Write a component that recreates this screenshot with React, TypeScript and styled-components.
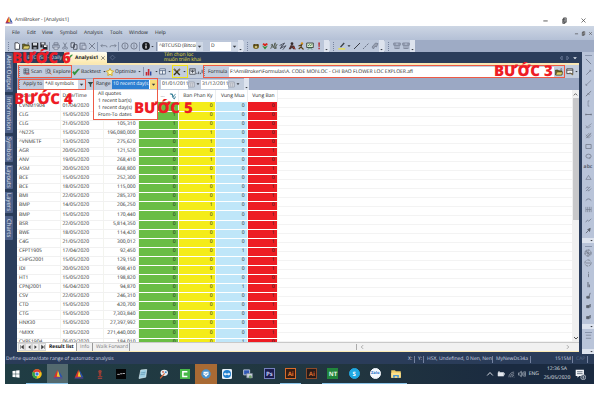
import React from "react";
import styled, { createGlobalStyle, css } from "styled-components";

const Global = createGlobalStyle`
  * { box-sizing: border-box; }
  body { margin: 0; background: #fff; text-rendering: geometricPrecision; }
  body, button, input, select { font-family: "Open Sans", "Noto Sans", sans-serif; font-size: 5px; line-height: 8px; color: #1c1e24; text-rendering: geometricPrecision; }
  button, input, select { border: 0; padding: 0; margin: 0; background: none; appearance: none; border-radius: 0; }
  svg { display: block; flex: none; }
`;

/* ---------- icons ---------- */
const K = "#3a3d45";
const G = "#6f7789";
const art: Record<string, React.ReactNode> = {
  file: <path d="M2 .8h3l1.5 1.5v5H2z" fill="#fff" stroke={K} strokeWidth=".9" />,
  open: <><path d="M.5 7V2h2.5l.8.8H7V7z" fill="#6b6426" stroke="#3b3a1c" strokeWidth=".6" /><path d="M.7 7 2 4h5.8L6.6 7z" fill="#e0cf6a" stroke="#3b3a1c" strokeWidth=".5" /><path d="M5 1.2h2l-.6-.8" stroke={K} strokeWidth=".5" fill="none" /></>,
  save: <><path d="M.7.7h6.6v6.6H.7z" fill="#24262b" /><path d="M2 .9h4v2.6H2z" fill="#d7dbe2" /><path d="M2.4 5h3.2v2.2H2.4z" fill="#8a909c" /></>,
  saveAll: <><path d="M.3.3h5.2v5.2H.3z" fill="#24262b" /><path d="M1.4.5h3v2h-3z" fill="#d7dbe2" /><path d="M2.7 2.9h5v5h-5z" fill="#24262b" stroke="#c8d0df" strokeWidth=".4" /><path d="M4 3.3h2.6V5H4z" fill="#fff" /></>,
  print: <><path d="M2 .8h4v2H2zM.8 3h6.4v3H.8z" fill="none" stroke={G} strokeWidth=".8" /><path d="M2 5h4v2.4H2z" fill="#cdd4e0" stroke={G} strokeWidth=".6" /></>,
  cut: <><path d="M2.4.6 5 5.2M5.6.6 3 5.2" stroke={G} strokeWidth=".8" /><circle cx="2.5" cy="6.2" r="1" fill="none" stroke={G} strokeWidth=".7" /><circle cx="5.5" cy="6.2" r="1" fill="none" stroke={G} strokeWidth=".7" /></>,
  copy: <path d="M1 .8h3.5v4.5H1zM3.5 2.7H7v4.6H3.5z" fill="#cfd6e4" stroke="#3c4250" strokeWidth=".8" />,
  paste: <><path d="M1 1.2h5v6H1z" fill="none" stroke={G} strokeWidth=".9" /><path d="M3 3.2h4v4H3z" fill="#c5cddd" stroke={G} strokeWidth=".7" /></>,
  x: <path d="m1 1 6 6M7 1 1 7" stroke={G} strokeWidth=".9" />,
  undo: <path d="M2.4 2.2.9 3.7l1.5 1.5M1 3.7h4.6q1.4 0 1.4 1.6" fill="none" stroke={G} strokeWidth=".8" />,
  redo: <path d="M5.6 2.2l1.5 1.5-1.5 1.5M7 3.7H2.4Q1 3.7 1 5.3" fill="none" stroke={G} strokeWidth=".8" />,
  nav: <><circle cx="4" cy="4" r="3.1" fill="none" stroke={G} strokeWidth=".9" /><path d="M4 2.3v3.4" stroke={G} strokeWidth=".8" /></>,
  info: <><circle cx="4" cy="4" r="3.9" fill="#17191d" /><path d="M4 3.5v2.9M4 1.5v1.2" stroke="#fff" strokeWidth="1.2" /></>,
  gear: <><ellipse cx="4" cy="4.5" rx="3" ry="2.4" fill="#776722" /><circle cx="2.4" cy="3" r="1.1" fill="#4c3d1c" /><circle cx="5.6" cy="3" r="1.1" fill="#4c3d1c" /><circle cx="4" cy="5" r="1" fill="#e6d9a0" /></>,
  heart: <><path d="M4 4.5 1.5 2.6 2.5 1 4 2 5.6.9 7 2.3z" fill="#d8261d" /><path d="M1 3.4 4 7.6 7 3.4 4 5z" fill="#2f8c35" /></>,
  pulse: <path d="m.7 6.8 1.7-4 .8 3 2-5-.5 6L7.2 2M.8 3l2-.7m2.4 4.3 1.8-.9" fill="none" stroke="#454c3d" strokeWidth=".8" />,
  pulse2: <path d="m.6 3.5 5-2.5-3.6 5 5-2.3-3.2 4M1.2 7l2-4" fill="none" stroke="#4a4e5b" strokeWidth=".9" />,
  person: <><circle cx="4" cy="1.7" r="1.4" fill="#342a2a" /><path d="M.6 7.3 2.8 3l3.5.8 1.2 3.5H5.2L4 5.7 2.8 7.3z" fill="#4e3230" /><path d="m5 5 2.4 2" stroke="#b43328" /></>,
  runner: <><circle cx="5" cy="1.5" r="1.2" fill="#d8941c" /><path d="M1.5 4 4.7 2.7 4 5l2.5 2.5M4 5 1.7 7" fill="none" stroke="#594115" strokeWidth="1.1" /></>,
  board: <><path d="M.7 1h6.6v4.5H.7z" fill="#dce9cf" stroke="#38443c" strokeWidth=".9" /><path d="M2 7.5 4 5.4 6 7.5M2 4l1.4-1.3 1.3 1L6 2.2" fill="none" stroke="#32763e" strokeWidth=".8" /></>,
  alert: <path d="M3.3.6h1.6L4.6 5h-1zM3.4 5.8h1.4v1.5H3.4z" fill="#b6242b" />,
  pen: <><path d="M2 4.7 5.7.6l1 1L3 5.4z" fill="#3a3f46" /><path d="M.4 6.3h6.8v1.2H.4z" fill="#f3e433" /></>,
  line: <path d="M1 7 7 1" stroke={K} strokeWidth="1" />,
  dotline: <path d="M1 7 7 1" stroke={G} strokeWidth="1" strokeDasharray="2 .7" />,
  hand: <path d="M1 5 4.5 1l2.5.6L5.4 5 4 4.2 2.4 7z" fill="#9aa2b2" stroke={G} strokeWidth=".7" />,
  grid: <path d="M.7 1h6.6v2.2H.7zM4 3v3.5M1.5 6.5h5M2 1v5m4-5v5" fill="none" stroke={G} strokeWidth=".7" />,
  scan: <><path d="M1 1h5.5v5.7H1zM1 3h5.5M1 5h5.5M3 1v5.5" fill="none" stroke="#424a5a" strokeWidth=".7" /><path d="M3.5 6.8h4" stroke="#d33" /></>,
  explore: <><path d="M.8 1.2h5v5h-5z" fill="none" stroke="#6f7686" strokeWidth=".7" strokeDasharray="1 .5" /><circle cx="4" cy="3.6" r="1.7" fill="none" stroke="#383c44" strokeWidth=".7" /><path d="m5.3 5 2 2.3" stroke="#c4552d" strokeWidth="1" /></>,
  check: <path d="m.5 4.2 2 3L7.6.9 5.7 1.2 2.6 4.6 1.8 3.2z" fill="#2f9c38" stroke="#1a6b25" strokeWidth=".3" />,
  star: <path d="m4 .4 1.1 2.3 2.5.4-1.8 1.8.4 2.6L4 6.3 1.8 7.5l.4-2.6L.4 3.1l2.5-.4z" fill="#fff8b0" stroke="#d3a415" strokeWidth=".9" />,
  bars: <><path d="M.7 4h1.6v3.4H.7zM2.8 1h1.6v6.4H2.8z" fill="#c52731" /><path d="M5 3.5h1.4v3.9H5z" fill="#2c4aa2" /></>,
  table: <path d="M.7 1h6.6v6H.7zM.7 3h6.6M4 3v4" fill="#f2f4f8" stroke="#3e5271" strokeWidth=".8" />,
  tools: <><path d="m1 1 5.8 6M6.8 1 1 7" stroke="#3c3718" strokeWidth="1.4" /><path d="m1 1 1.6 1.6M7 1 5.2 2.8" stroke="#88734a" strokeWidth="1.4" /></>,
  plusbox: <path d="M.8.8h6.4v6.4H.8zM4 2v4M2 4h4M1 2.4h6" fill="#e6e9ef" stroke="#373b43" strokeWidth=".8" />,
  dots: <path d="M1 7V5.5M3 7V4M5 7V5.5M7 6V2" stroke="#434955" strokeWidth="1" />,
  funnel: <path d="M.8 1h6.4L4.8 4v3.2L3.2 6V4z" fill="#314b47" />,
  cal: <><path d="M.8 1.2h6.4v5.6H.8z" fill="#f3f4f7" stroke="#808898" strokeWidth=".7" /><path d="M1 2.5h6M3 2.5v4M5 2.5v4M1 4.6h6" stroke="#808898" strokeWidth=".5" /></>,
  sort: <path d="M1 1.2h3v3h2M3.8 4.2 6 7l1.5-3M2 .8 5 3.4 7.5 1.5" fill="none" stroke="#2d7890" strokeWidth="1" />,
  editPage: <><path d="M.8.8h6v4.8h-6zM.8 2.2h6" fill="#f3f4f5" stroke="#333" strokeWidth=".8" /><path d="m3 4 3.5 3.5L7.5 6z" fill="#7a6b45" /></>,
  ami: <><path d="M3.6.4.5 7h4z" fill="#d5322b" /><path d="M4 1.2 3 6l3 .3z" fill="#efc938" /><path d="M4.3.6 7.7 6.8 5.5 6z" fill="#2850ae" /><path d="m.3 7.5 1-1h5.3l1 1z" fill="#5a45a0" /></>,
  windows: <path d="m.5 1.1 3.1-.4v3.1H.5zm3.6-.5L7.5.2v3.6H4.1zM.5 4.2h3.1v3.1L.5 6.9zm3.6 0h3.4v3.6l-3.4-.5z" fill="#fff" />,
  chrome: <><circle cx="4" cy="4" r="3.8" fill="#f3c318" /><path d="M4 4 .7 2.1A3.8 3.8 0 0 1 7.3 2.1z" fill="#df3f30" /><path d="M4 4 .7 2.1A3.8 3.8 0 0 0 3.8 7.8z" fill="#34a34c" /><circle cx="4" cy="4" r="1.8" fill="#fff" /><circle cx="4" cy="4" r="1.35" fill="#3b78d5" /></>,
  figure: <><circle cx="4" cy="2" r="1.3" fill="#a8463c" /><path d="M2.8 1.2 4 2.4 5.3 1.2M2.8 3h2.4l-.5 2.5h1.2v.9H2.2v-.9h1.2z" fill="#8f3a33" /><path d="M2.3 7.4h3.4" stroke="#bd4840" strokeWidth=".8" /></>,
  black: <><path d="M0 0h8v8H0z" fill="#050506" /><path d="M1 4.3h2m.3-.5H5m.3-.2h1.8" stroke="#c9ccd0" strokeWidth=".7" /></>,
  notebook: <><path d="M2.2.8 7 .3 6.2 6.5.8 7.6z" fill="#9fcfe2" stroke="#e0f0f5" strokeWidth=".5" /><path d="M2 3.2 6 2.6M1.8 4.6l4-.6" stroke="#578fab" strokeWidth=".5" /></>,
  paint: <><ellipse cx="4.2" cy="3" rx="3" ry="2.5" fill="#e9f0f4" /><circle cx="5.4" cy="2.5" r=".8" fill="#4288c7" /><circle cx="3.2" cy="2.3" r=".7" fill="#d05538" /><path d="m1 7.5 3.5-4" stroke="#d8673b" strokeWidth="1" /></>,
  camtasia: <><path d="M0 0h8v8H0z" fill="#49b849" /><path d="M5.9 2.2H2.3v3.7h3.6" fill="none" stroke="#fff" strokeWidth="1.2" /></>,
  shield: <><circle cx="4" cy="4" r="3.8" fill="#4993cf" /><path d="M2 2.2h4v2L4 6.4 2 4.2z" fill="#fff" /><path d="m3 3.5 1 1 1.2-1.5" fill="none" stroke="#3779b7" strokeWidth=".6" /></>,
  team: <><rect width="8" height="8" rx="1" fill="#e9f2f9" /><circle cx="4" cy="4" r="3.2" fill="#2181d0" /><path d="m1.3 4 1.5-1.3v.8h2.4v-.8L6.7 4 5.2 5.3v-.8H2.8v.8z" fill="#fff" /></>,
  remote: <><path d="M.5.7h4.8v4H.5z" fill="#3158b6" stroke="#c2cbdb" strokeWidth=".7" /><path d="M3 3.6h4.5v3.5H3z" fill="#ccd3dd" stroke="#7c8798" strokeWidth=".5" /><circle cx="5.8" cy="6.2" r="1.2" fill="#72a36c" /></>,
  folder: <><path d="M.2 1h3l.6.8h4V7H.2z" fill="#f3cf68" /><path d="M.2 3h7.6v4H.2z" fill="#fbe18d" /><path d="M1.7 4.8h4.6V7H5V5.8H3V7H1.7z" fill="#4b97d1" /></>,
  up: <path d="m1.2 5.5 2.8-3 2.8 3" fill="none" stroke="#e4e8ee" strokeWidth=".9" />,
  battery: <><path d="M1 2.5h5.7v3.6H1zM7 3.5h.7V5" fill="#e4e8ee" stroke="#e4e8ee" strokeWidth=".5" /><path d="M2 1v3" stroke="#e4e8ee" strokeWidth=".9" /></>,
  wifi: <path d="M1 7.2a6 6 0 0 1 6-6M2.8 7.2A4.2 4.2 0 0 1 7 3M4.6 7.2A2.4 2.4 0 0 1 7 4.8M6.5 7h.8" fill="none" stroke="#aeb5c1" strokeWidth=".7" />,
  sound: <><path d="M.3 3h1.2L3.3 1.3v5.4L1.5 5H.3z" fill="none" stroke="#d4dae3" strokeWidth=".6" /><path d="M4.4 2.5q1 1.5 0 3M5.6 1.7q1.5 2.3 0 4.6M6.8 1q2 3 0 6" fill="none" stroke="#d4dae3" strokeWidth=".6" /></>,
  note: <><path d="M.5.6h6v4.5H3L1.8 6.4V5.1H.5z" fill="#f5f7fa" /><path d="M1.5 2h4M1.5 3.4h4" stroke="#24344b" strokeWidth=".5" /><circle cx="6" cy="6" r="1.8" fill="#38475d" stroke="#cfd5de" strokeWidth=".5" /><path d="M6 5v2" stroke="#fff" strokeWidth=".5" /></>,
  down: <path d="M2 3h4L4 5.3z" fill="#32363e" />,
  tinyDown: <path d="M1.5 3h5L4 5.8z" fill="#e6ebf3" />,
  navL: <path d="M5.5 1.5 3 4l2.5 2.5z" fill="none" stroke="#8696b3" strokeWidth=".8" />,
  navR: <path d="M2.5 1.5 5 4 2.5 6.5z" fill="none" stroke="#8696b3" strokeWidth=".8" />,
  diamond: <path d="M4 1.3 6.7 4 4 6.7 1.3 4z" fill="none" stroke="#6c7b99" strokeWidth=".7" />,
  chevUp: <path d="m2 5 2-2 2 2" fill="none" stroke="#555" strokeWidth="1" />,
  chevDown: <path d="m2 3 2 2 2-2" fill="none" stroke="#555" strokeWidth="1" />,
  chevL: <path d="M5.5 1.5 3 4l2.5 2.5" fill="none" stroke="#888" strokeWidth=".9" />,
  chevR: <path d="M2.5 1.5 5 4 2.5 6.5" fill="none" stroke="#888" strokeWidth=".9" />,
  first: <path d="M2 1.5v5M6 1.5 3 4l3 2.5z" fill="#333" stroke="#333" strokeWidth=".6" />,
  prev: <path d="M6 1.5 3 4l3 2.5z" fill="#333" />,
  next: <path d="m2 1.5 3 2.5-3 2.5z" fill="#333" />,
  last: <path d="m2 1.5 3 2.5-3 2.5zM6 1.5v5" fill="#333" stroke="#333" strokeWidth=".6" />,
  dl1: <path d="m1 1 6 6" stroke={G} strokeWidth="1" />,
  dl2: <path d="M1.5 6.5 6 2m-1-.5h1.5V3" stroke={G} strokeWidth=".9" fill="none" />,
  dl3: <path d="M1.2 7 7 1.5M1 5.5v1.7h1.5" stroke={G} strokeWidth=".7" fill="none" />,
  dl4: <path d="M1 7 7 1.3M3 3.5l2 2" stroke="#656c7b" strokeWidth=".9" fill="none" />,
  dl5: <path d="M5 1H3.5v6H5" stroke={G} strokeWidth=".7" fill="none" />,
  dl6: <path d="M.5 4h7M1 3v2m6-2v2" stroke="#656c7b" strokeWidth=".9" fill="none" />,
  dl7: <path d="m.7 6.8 3-2 3.8-3M1 4l2 3 3.5-2" stroke={G} strokeWidth=".6" fill="none" />,
  dl8: <path d="m1 5 4-4m-3 6 5-5M1 7l6-6m-3 6 3-3M1 3l3 4" stroke="#737a89" strokeWidth=".7" />,
  rect: <path d="M1 1.7h6v4.6H1z" fill="none" stroke="#6c7382" strokeWidth=".8" />,
  ell: <><ellipse cx="4" cy="3.6" rx="3" ry="2.3" fill="none" stroke="#6c7382" strokeWidth=".8" /><path d="M5.5 5v2" stroke="#6c7382" strokeWidth=".6" /></>,
  tri: <path d="m4 1.6 3 4.6H1z" fill="none" stroke={G} strokeWidth=".7" />,
  wave: <path d="m1 4 2-2 1 2 2-2M1 7l2-2 1 2 3-3" fill="none" stroke={G} strokeWidth=".8" />,
  arc: <path d="M.8 5.3q3.2-4 6.4 0" fill="none" stroke={G} strokeWidth=".9" />,
  fib: <path d="M1 1v6m2-6v6m2-6v6m2-6v6M1 4h6" stroke={G} strokeWidth=".7" />,
  zig: <path d="m.8 6 2-2.5 1.5 1.3L7.2 2" fill="none" stroke={G} strokeWidth=".8" />,
  arrow: <path d="m1 7 2.5-2.5M3 3l3-1.5L5.3 5z" fill="#59606d" stroke="#59606d" strokeWidth=".9" />,
  globe: <><circle cx="4" cy="4" r="3.2" fill="none" stroke="#6d7482" strokeWidth=".8" strokeDasharray="3 .6" /><path d="M1 4h6M4 1v6M2 2l4 4" stroke="#6d7482" strokeWidth=".7" /></>,
  ring: <><circle cx="4" cy="4" r="3.1" fill="none" stroke="#7b8290" strokeWidth=".9" strokeDasharray="3.5 1" /><path d="M2 4h4" stroke="#7b8290" strokeWidth=".8" /></>,
  t1: <path d="M4 1v1m0 1v4" stroke="#697080" strokeWidth=".9" />,
  t2: <path d="M3.4 1v6M5 4v3" stroke="#697080" strokeWidth="1.2" />,
  t3: <path d="M2 5h3v2H2zM4.6 5l1.4-4" fill="#59606d" stroke="#59606d" strokeWidth=".9" />,
  t4: <path d="M1.8 4h3v2.5h-3zM5 4l1-1.5V6" fill="#59606d" stroke="#59606d" strokeWidth=".8" />,
  bar2: <path d="M1 2.5h6M1 6h6" stroke="#818a9c" strokeWidth="1" />,
  min: <path d="M1.5 4.5h5" stroke="#333" strokeWidth=".9" />,
  restore: <path d="M3 1h3v5H3zM2 2.3h2.5v5H2z" fill="#c9cbd0" stroke="#333" strokeWidth=".8" />,
  close: <path d="m1.7 1.7 4.6 4.6M6.3 1.7 1.7 6.3" stroke="#444" strokeWidth=".8" />,
};
const Svg = styled.svg<{ $s: number }>`width: ${p => p.$s}px; height: ${p => p.$s}px;`;
const Icon = ({ n, s = 8 }: { n: string; s?: number }) => <Svg $s={s} viewBox="0 0 8 8" aria-hidden>{art[n]}</Svg>;

/* ---------- frame ---------- */
const Screen = styled.main`position: relative; padding: 14px 6px 0 5px; white-space: nowrap; overflow: hidden;`;
const TitleBar = styled.header`display: flex; align-items: center; height: 12px; gap: 2px; background: #fff;`;
const Fill = styled.div`flex: 1;`;
const WinButtons = styled.div`display: flex; gap: 11px; padding-right: 7px;`;
const IconButton = styled.button<{ $w?: number }>`
  display: flex; align-items: center; justify-content: center; flex: none; width: ${p => p.$w ?? 10}px; height: 10px;
`;
const MenuBar = styled.nav`
  display: flex; align-items: center; height: 14px; padding-left: 7px; background: linear-gradient(#cdd6e4, #b4c0d6);
`;
const MenuItem = styled.button<{ $w: number }>`width: ${p => p.$w}px; text-align: left;`;
const Grip = styled.i`flex: none; width: 1px; height: 9px; margin-right: 3px; border-left: 1px dotted #7885a0;`;
const ToolBar = styled.div`display: flex; align-items: center; height: 12px; background: #9eabc5;`;
const ToolGroup = styled.div<{ $w: number }>`
  display: flex; align-items: center; flex: none; width: ${p => p.$w}px; height: 12px; padding-left: 3px; background: #bcc7da; border-radius: 0 2px 2px 0; border-right: 1px solid #d4dce8;
`;
const Rule = styled.i`flex: none; width: 1px; height: 9px; margin: 0 1px; background: #8996af;`;
const More = styled.button`
  flex: none; width: 5px; height: 12px; margin-left: auto; display: flex; align-items: flex-end; background: #dde3ee;
`;
const Field = styled.select<{ $w: number; $mark?: boolean }>`
  flex: none; width: ${p => p.$w}px; height: 9px; padding: 0 7px 0 1px; background: ${p => p.$mark ? "linear-gradient(90deg, #2c7fd2 37px, #fff 37px)" : "#fff"};
  color: ${p => p.$mark ? "#fff" : "#1c1e24"}; text-overflow: clip; overflow: hidden; line-height: 9px;
`;
const FieldBox = styled.span`position: relative; display: flex; flex: none;`;
const FieldArrow = styled.span<{ $hot?: boolean }>`
  position: absolute; right: 0; top: 0; display: flex; align-items: center; width: 7px; height: 9px; pointer-events: none;
  background: ${p => p.$hot ? "#f8dc78" : "#cfd8e6"};
`;
const Select = ({ label, value, w, mark }: { label: string; value: string; w: number; mark?: boolean }) => (
  <FieldBox><Field aria-label={label} $w={w} $mark={mark}><option>{value}</option></Field><FieldArrow $hot={mark}><Icon n="down" s={7} /></FieldArrow></FieldBox>
);

/* ---------- work area ---------- */
const Work = styled.div`display: flex; background: #2b3d5b; height: 302px;`;
const SideTabs = styled.aside`display: flex; flex-direction: column; gap: 3px; width: 12px; padding-top: 1px;`;
const SideTab = styled.button<{ $h: number }>`
  width: 8px; height: ${p => p.$h}px; writing-mode: vertical-rl; background: #50628a; color: #e0e6f0; font-size: 6px; line-height: 8px; border-radius: 0 1px 1px 0;
`;
const Center = styled.section`flex: 1; min-width: 0; display: flex; flex-direction: column; padding-bottom: 2px;`;
const DocTabs = styled.div`display: flex; align-items: center; gap: 2px; height: 11px; flex: none; color: #dfe5ef;`;
const DocTab = styled.button<{ $active?: boolean; $w: number }>`
  display: flex; align-items: center; gap: 2px; width: ${p => p.$w}px; height: 11px; padding-left: 2px; color: #dfe5ef; justify-content: flex-end;
  ${p => p.$active && css`background: linear-gradient(#fffdf2, #fde9ae); color: #222; font-weight: 700; justify-content: flex-start; border-radius: 1px 1px 0 0;`}
`;
const Hint = styled.p`margin: 0 0 0 46px; color: #eee03c; line-height: 5px;`;
const DocNav = styled.div`display: flex; margin-left: auto; padding-right: 1px; gap: 1px;`;
const Bar = styled.div<{ $h: number; $top?: boolean }>`
  display: flex; flex: none; align-items: center; height: ${p => p.$h}px; padding-left: 1px; background: ${p => p.$top ? "#c3cddd" : "#9ba8c4"};
  ${p => p.$top && css`border-top: 2px solid #f9e8b5;`}
`;
const Framed = styled.div<{ $c?: string; $grow?: boolean }>`
  display: flex; align-items: center; height: 13px; padding: 0 1px; outline: 1px solid ${p => p.$c ?? "#ee5a45"}; outline-offset: -1px; flex: ${p => p.$grow ? 1 : "none"};
`;
const ToolButton = styled.button<{ $w: number }>`display: flex; align-items: center; gap: 1px; width: ${p => p.$w}px; height: 10px; flex: none;`;
const FormulaLabel = styled.label`width: 21px; flex: none;`;
const FormulaInput = styled.input`flex: 1; min-width: 0; height: 10px; padding-left: 1px; background: #fff;`;
const FilterGroup = styled.div<{ $w: number }>`
  position: relative; flex: none; display: flex; align-items: center; width: ${p => p.$w}px; height: 11px; padding-left: 3px; background: #c3cddd;
`;
const ApplyGroup = styled(FilterGroup)`outline: 1px solid #ee5a45; outline-offset: -1px; padding-left: 1px;`;
const Label = styled.span<{ $w: number }>`width: ${p => p.$w}px; flex: none;`;
const DateInput = styled.input`width: 27px; height: 9px; background: #fff; padding-left: 1px; flex: none;`;
const Menu = styled.ul`
  position: absolute; z-index: 2; left: 0; top: -1px; width: 65px; height: 42px; margin: 0; padding: 12px 0 0 4px; list-style: none;
  border: 1px solid #ee5a45; background: linear-gradient(transparent 11px, #fff 11px); line-height: 7px; pointer-events: none;
`;
const SheetWrap = styled.div`display: flex; flex: 1; min-height: 0; background: #fff;`;
const Sheet = styled.div`
  flex: 1; overflow: hidden; background: repeating-linear-gradient(#fff 0 8px, #f3f3f3 8px 9px);
`;
const Table = styled.table`border-collapse: collapse; table-layout: fixed; width: 260px; line-height: 7px; background: #fff;`;
const Th = styled.th<{ $left?: boolean; $w: number }>`
  width: ${p => p.$w}px; height: 12px; padding: 0 2px; text-align: ${p => p.$left ? "left" : "right"}; font-weight: 400; border-right: 1px solid #eceef0;
`;
const HeaderRow = styled.tr`background: #fff;`;
const HeadFlex = styled.span`display: flex; justify-content: flex-end; align-items: center; gap: 4px;`;
const Row = styled.tr`height: 9px; &:nth-child(13n) { height: 10px; }`;
const Td = styled.td<{ $bg?: string; $left?: boolean }>`
  padding: 0 2px; overflow: hidden; text-align: ${p => p.$left ? "left" : "right"}; background: ${p => p.$bg ?? "#fff"};
  border-right: 1px solid #f3f4ee; border-bottom: 1px solid ${p => p.$bg ? "rgba(255,255,255,.6)" : "#f1f1f1"}; background-clip: padding-box;
`;
const VScroll = styled.div`width: 7px; flex: none; display: flex; flex-direction: column; align-items: center; background: #f0f0f0; padding-top: 1px;`;
const Thumb = styled.i`width: 6px; height: 122px; background: #c8c8ca;`;
const SheetTabs = styled.div`
  display: flex; flex: none; align-items: center; height: 10px; background: #f1f1f1; border-top: 1px solid #c9c9c9; border-bottom: 1px solid #fbe9b4; padding-left: 1px;
`;
const PageButton = styled.button`width: 7px; height: 8px; border: 1px solid #d5d5d5; display: flex; justify-content: center; align-items: center; flex: none;`;
const SheetTab = styled.button<{ $w: number; $active?: boolean }>`
  width: ${p => p.$w}px; height: 8px; padding: 0 0 0 3px; text-align: left; border-right: 1px solid #999; flex: none;
  color: ${p => p.$active ? "#111" : "#777"}; background: ${p => p.$active ? "#fff" : "none"}; font-weight: ${p => p.$active ? 700 : 400};
`;
const HScroll = styled.div`display: flex; flex: 1; justify-content: space-between; align-items: center; margin-left: 226px; padding: 0 8px 0 2px; border-left: 1px solid #aaa;`;
const Draw = styled.aside`width: 12px; flex: none; margin-left: 3px; background: #b9c4d9; display: flex; flex-direction: column; align-items: center;`;
const DrawGroup = styled.div<{ $h: number }>`
  height: ${p => p.$h}px; width: 100%; display: flex; flex-direction: column; align-items: center; justify-content: space-between; padding-top: 3px;
`;
const DrawHandle = styled.i`width: 7px; height: 1px; background: #8995ac; flex: none;`;
const DrawMore = styled.button`height: 5px; width: 100%; display: flex; justify-content: flex-end; background: #dde3ee; margin-top: auto; flex: none;`;
const DrawButton = styled.button`display: flex; align-items: center; justify-content: center; height: 10px; width: 12px; color: #5c6371; font-weight: 700;`;

/* ---------- status and taskbar ---------- */
const Status = styled.footer`display: flex; align-items: center; height: 10px; background: #2a3c59; color: #d3dae6; padding: 0 6px 0 1px;`;
const Cell = styled.span<{ $w: number; $dim?: boolean }>`
  width: ${p => p.$w}px; flex: none; padding-left: 3px; border-right: 1px solid #7482a0; color: ${p => p.$dim ? "#5f708e" : "#d3dae6"}; line-height: 7px;
`;
const TaskBar = styled.footer`display: flex; align-items: center; height: 20px; background: linear-gradient(90deg, #203d44, #21353f 60%, #1a2a40 85%);`;
const Apps = styled.div`display: grid; grid-template-columns: repeat(19, 1fr); flex: none; width: 402px;`;
const TaskButton = styled.button<{ $bg?: string; $run?: boolean }>`
  display: flex; align-items: center; justify-content: center; height: 20px; background: ${p => p.$bg ?? "none"};
  border-bottom: 1px solid ${p => p.$run ? "#8cc5ea" : "transparent"};
`;
const Tile = styled.span<{ $bg: string; $fg: string; $bd: string; $round?: boolean; $small?: boolean }>`
  width: 11px; height: 11px; display: flex; align-items: center; justify-content: center; font-weight: 700; font-size: ${p => p.$small ? 4 : 6}px; line-height: 8px;
  background: ${p => p.$bg}; color: ${p => p.$fg}; border: 1px solid ${p => p.$bd}; border-radius: ${p => p.$round ? "6px" : 0};
`;
const Tray = styled.div`display: flex; align-items: center; margin-left: auto; gap: 3px; color: #e6eaf0; padding-right: 8px;`;
const Clock = styled.time`width: 30px; text-align: center; line-height: 9px; white-space: pre-line; flex: none;`;

const Step = styled.strong<{ $x: number; $y: number }>`
  position: absolute; z-index: 5; left: ${p => p.$x}px; top: ${p => p.$y}px; color: #ee1c25; font-size: 15px; line-height: 20px; font-weight: 900;
`;

const menus: [string, number][] = [["File", 15], ["Edit", 15], ["View", 18], ["Symbol", 24], ["Analysis", 26], ["Tools", 19], ["Window", 26], ["Help", 20]];
const main1 = ["file", "open", "save", "saveAll", "|", "print", "cut", "copy", "paste", "x", "|", "undo", "redo", "|", "nav", "nav", "|", "info"];
const main2 = ["gear", "heart", "pulse", "pulse2", "person", "runner", "board", "alert"];
const rows = `CVNM1904|01/04/2020|94,010|1|0|0|0
CLG|15/05/2020|101,210|1|0|0|0
CLG|21/05/2020|105,310|1|0|0|0
^N225|15/05/2020|196,080,000|0|1|0|0
^VNMETF|13/05/2020|275,620|0|1|0|0
AGR|20/05/2020|121,520|0|0|0|1
ANV|19/05/2020|268,410|0|1|0|0
ASM|20/05/2020|668,800|0|0|0|1
BCE|15/05/2020|252,300|0|1|0|0
BCE|18/05/2020|115,000|0|0|0|1
BMI|22/05/2020|285,370|0|0|0|1
BMP|14/05/2020|206,250|0|1|0|0
BMP|15/05/2020|170,440|0|0|0|1
BSR|22/05/2020|5,814,350|0|0|0|1
BWE|18/05/2020|114,420|0|0|0|1
C4G|21/05/2020|300,012|0|0|0|1
CFPT1905|17/04/2020|92,450|0|0|1|0
CHPG2001|15/05/2020|129,150|0|0|0|1
IDI|20/05/2020|998,410|0|0|0|1
HT1|15/05/2020|198,820|0|1|0|0
CPNJ2001|16/04/2020|94,870|0|0|1|0
CSV|22/05/2020|246,310|0|0|0|1
CTD|15/05/2020|420,700|0|0|0|1
CTG|15/05/2020|7,303,840|0|0|0|1
HNX30|15/05/2020|27,397,992|0|0|0|1
^MIXX|13/05/2020|271,440,000|0|0|0|1
CVRE1904|06/03/2020|184,010|0|0|1|0`.split("\n").map(r => r.split("|"));
const fills = [undefined, undefined, undefined, "#6abd45", "#f4ec19", "#bfe6f9", "#ed1c24"];
const draw1 = ["dl1", "dl2", "dl3", "dl4", "dl5", "dl6", "dl7", "dl8", "rect", "ell", "abc", "tri", "wave", "arc", "fib", "zig", "arrow"];
const draw2 = ["globe", "ring", "t1", "t2", "t3", "t4", "t4"];
const sides: [string, number][] = [["Alert Output", 39], ["Information", 38], ["Symbols", 26], ["Layouts", 24], ["Layers", 21], ["Charts", 24]];

type Task = { n?: string; t?: string; bg?: string; run?: boolean; tile?: [string, string, string, boolean?] };
const tasks: Task[] = [
  { n: "windows" }, { n: "chrome", run: true }, { n: "ami", bg: "#536a6f", run: true }, { n: "ami" }, { n: "figure" }, { n: "black" },
  { n: "notebook" }, { n: "paint" }, { n: "camtasia" }, { n: "shield", bg: "#a96a34" }, { n: "team" }, { n: "remote" },
  { t: "Ps", tile: ["#1b1c4e", "#bdc8f5", "#7480bd"] }, { t: "Ai", tile: ["#361c12", "#e8772e", "#d86c2b"], run: true },
  { t: "Ai", tile: ["#271a18", "#d66c31", "#8c4a29"] }, { t: "NT", tile: ["#21863c", "#e7f4e8", "#21863c"], run: true },
  { t: "S", tile: ["#20a8e2", "#fff", "#20a8e2", true], run: true }, { t: "Zalo", tile: ["#f4f8fd", "#216fc5", "#f4f8fd", true], run: true }, { n: "folder", run: true },
];

const Overflow = () => <More aria-label="More"><Icon n="down" s={5} /></More>;

export default function App() {
  return (
    <>
      <Global />
      <Screen>
        <TitleBar><Icon n="ami" />AmiBroker - [Analysis1]<Fill />
          <WinButtons>{["min", "restore", "close"].map(n => <IconButton key={n} $w={8} aria-label={n}><Icon n={n} s={7} /></IconButton>)}</WinButtons>
        </TitleBar>
        <MenuBar>{menus.map(([m, w]) => <MenuItem key={m} $w={w}>{m}</MenuItem>)}<Fill />
          {["min", "restore", "close"].map(n => <IconButton key={n} $w={7} aria-label={`${n} document`}><Icon n={n} s={5} /></IconButton>)}
        </MenuBar>
        <ToolBar>
          <ToolGroup $w={239}><Grip />
            {main1.map((n, i) => n === "|" ? <Rule key={i} /> : <IconButton key={i} $w={9} aria-label={n}><Icon n={n} /></IconButton>)}
            <Icon n="down" s={5} /><Rule />
            <Select label="Symbol" value="^BTCUSD (Bitcoi" w={45} /><Fill /><Select label="Interval" value="D" w={28} /><Overflow />
          </ToolGroup>
          <ToolGroup $w={86}><Grip />{main2.map(n => <IconButton key={n} $w={9} aria-label={n}><Icon n={n} /></IconButton>)}<Overflow /></ToolGroup>
          <ToolGroup $w={55}><Grip /><IconButton $w={9} aria-label="Highlight"><Icon n="pen" /></IconButton><Icon n="down" s={6} />
            {["line", "dotline", "hand"].map(n => <IconButton key={n} $w={9} aria-label={n}><Icon n={n} /></IconButton>)}<Overflow /></ToolGroup>
          <ToolGroup $w={30}><Grip /><IconButton $w={9} aria-label="Grid"><Icon n="grid" /></IconButton><IconButton $w={9} aria-label="Columns"><Icon n="grid" /></IconButton><Overflow /></ToolGroup>
        </ToolBar>
        <Work>
          <SideTabs>{sides.map(([t, h]) => <SideTab key={t} $h={h}>{t}</SideTab>)}</SideTabs>
          <Center>
            <DocTabs>
              <DocTab $w={45}>BTCUSD - Daily</DocTab>
              <DocTab $active $w={43}><Icon n="check" s={7} />Analysis1<Icon n="close" s={6} /></DocTab>
              <Icon n="diamond" s={7} />
              <Hint>Tên chọn lọc<br />muốn triển khai</Hint>
              <DocNav><Icon n="navL" s={6} /><Icon n="navR" s={6} /><Icon n="tinyDown" s={6} /></DocNav>
            </DocTabs>
            <Bar $h={15} $top>
              <Framed><Grip />
                <ToolButton $w={22}><Icon n="scan" s={7} />Scan</ToolButton>
                <ToolButton $w={26}><Icon n="explore" s={7} />Explore</ToolButton>
              </Framed>
              <ToolButton $w={34}><Icon n="check" />Backtest<Icon n="down" s={5} /></ToolButton>
              <ToolButton $w={36}><Icon n="star" />Optimize<Icon n="down" s={5} /></ToolButton><Rule />
              <ToolButton $w={14}><Icon n="bars" /><Icon n="down" s={5} /></ToolButton>
              <ToolButton $w={13}><Icon n="table" s={7} /><Icon n="down" s={5} /></ToolButton>
              <Framed $c="#f0e21d"><ToolButton $w={14}><Icon n="tools" /><Icon n="down" s={5} /></ToolButton></Framed>
              <IconButton $w={8} aria-label="Add"><Icon n="plusbox" s={7} /></IconButton>
              <IconButton $w={7} aria-label="Settings"><Icon n="dots" s={7} /></IconButton>
              <Framed $grow><Grip /><FormulaLabel htmlFor="formula">Formula</FormulaLabel>
                <FormulaInput id="formula" defaultValue={"F:\\AmiBroker\\Formulas\\A. CODE MOI\\LOC - CHI BAO FLOWER LOC EXPLOER.afl"} />
                <IconButton aria-label="Open formula"><Icon n="open" /></IconButton></Framed>
              <IconButton $w={9} aria-label="Edit formula"><Icon n="editPage" /></IconButton>
              <Icon n="down" s={5} />
            </Bar>
            <Bar $h={12}>
              <ApplyGroup $w={68}><Grip /><Label $w={21}>Apply to</Label><Select label="Apply to" value="*All symbols" w={41} /></ApplyGroup>
              <FilterGroup $w={7}><IconButton $w={3} aria-label="Filter"><Icon n="funnel" s={7} /></IconButton></FilterGroup>
              <FilterGroup $w={65}><Label $w={16}>Range</Label><Select label="Range" value="10 recent day(s)" w={45} mark />
                <Menu><li>All quotes</li><li>1 recent bar(s)</li><li>1 recent day(s)</li><li>From-To dates</li></Menu>
              </FilterGroup>
              <FilterGroup $w={91}><DateInput aria-label="From" defaultValue="01/01/2011" /><Icon n="cal" s={7} /><Icon n="down" s={6} />
                <DateInput aria-label="To" defaultValue="31/12/2011" /><Icon n="cal" s={7} /><Icon n="down" s={6} /><Overflow /></FilterGroup>
            </Bar>
            <SheetWrap>
              <Sheet>
                <Table>
                  <thead><HeaderRow>
                    <Th $w={43} $left>Ticker</Th><Th $w={43} $left>Date/Time</Th><Th $w={35}>Close</Th>
                    <Th $w={40}><HeadFlex>...<Icon n="sort" s={7} /></HeadFlex></Th><Th $w={37}>Ban Phan Ky</Th><Th $w={32}>Vung Mua</Th><Th $w={30}>Vung Ban</Th>
                  </HeaderRow></thead>
                  <tbody>{rows.map((r, i) => <Row key={i}>{r.map((c, j) => <Td key={j} $left={j < 2} $bg={fills[j]}>{c}</Td>)}</Row>)}</tbody>
                </Table>
              </Sheet>
              <VScroll><Icon n="chevUp" s={7} /><Thumb /><Fill /><Icon n="chevDown" s={8} /></VScroll>
            </SheetWrap>
            <SheetTabs>
              {["first", "prev", "next", "last"].map(n => <PageButton key={n} aria-label={`${n} sheet`}><Icon n={n} s={6} /></PageButton>)}
              <SheetTab $w={31} $active>Result list</SheetTab><SheetTab $w={16}>Info</SheetTab><SheetTab $w={37}>Walk Forward</SheetTab>
              <HScroll><Icon n="chevL" s={6} /><Icon n="chevR" s={6} /></HScroll>
            </SheetTabs>
          </Center>
          <Draw>
            <DrawGroup $h={184}><DrawHandle />{draw1.map(n => <DrawButton key={n} aria-label={n}>{n === "abc" ? n : <Icon n={n} s={7} />}</DrawButton>)}</DrawGroup>
            <DrawMore aria-label="More tools"><Icon n="down" s={5} /></DrawMore>
            <DrawGroup $h={78}><DrawHandle />{draw2.map((n, i) => <DrawButton key={i} aria-label={n}><Icon n={n} s={n === "globe" || n === "ring" ? 8 : 7} /></DrawButton>)}</DrawGroup>
            <DrawMore aria-label="More tools"><Icon n="down" s={5} /></DrawMore>
            <DrawGroup $h={18}><DrawHandle /><Icon n="bar2" s={7} /><Fill /></DrawGroup>
            <DrawMore aria-label="More tools"><Icon n="down" s={5} /></DrawMore>
          </Draw>
        </Work>
        <Status>Define quote/date range of automatic analysis<Fill />
          <Cell $w={10}>X:</Cell><Cell $w={9}>Y:</Cell><Cell $w={69}>HSX, Undefined, 0 Nen, Nen</Cell><Cell $w={38}>MyNewDs34a</Cell><Cell $w={21} /><Cell $w={21}>1515M</Cell><Cell $w={15} $dim>CAP</Cell>
        </Status>
        <TaskBar>
          <Apps>{tasks.map((t, i) => <TaskButton key={i} $bg={t.bg} $run={t.run} aria-label={t.n ?? t.t}>
            {t.n ? <Icon n={t.n} s={t.n === "windows" ? 8 : 10} /> : t.tile && <Tile $bg={t.tile[0]} $fg={t.tile[1]} $bd={t.tile[2]} $round={t.tile[3]} $small={t.t === "Zalo"}>{t.t}</Tile>}
          </TaskButton>)}</Apps>
          <Tray><Icon n="up" /><Icon n="battery" /><Icon n="wifi" s={7} /><Icon n="sound" />ENG<Clock>{"12:36 SA\n25/05/2020"}</Clock><Icon n="note" s={11} /></Tray>
        </TaskBar>
        <Step $x={12} $y={48}>BƯỚC 6</Step>
        <Step $x={14} $y={89}>BƯỚC 4</Step>
        <Step $x={134} $y={98}>BƯỚC 5</Step>
        <Step $x={494} $y={61}>BƯỚC 3</Step>
      </Screen>
    </>
  );
}
